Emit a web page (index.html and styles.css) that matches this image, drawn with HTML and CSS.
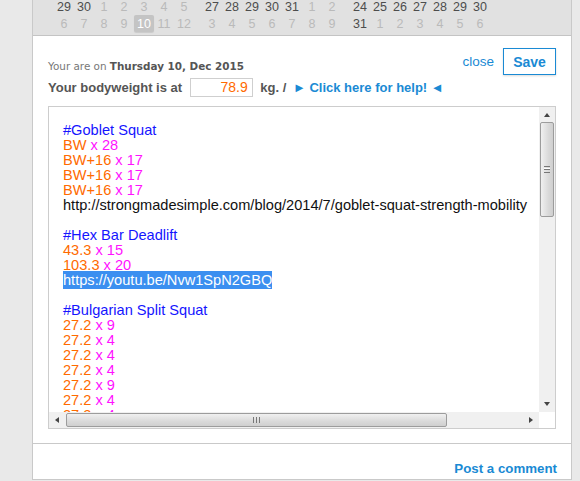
FILE: index.html
```html
<!DOCTYPE html>
<html>
<head>
<meta charset="utf-8">
<link rel="stylesheet" href="styles.css">
</head>
<body>
<div class="page">
  <div class="side"></div>
  <div class="panel">
    <div class="cal">
      <div class="grid">
        <div class="grp">
          <span class="d">29</span><span class="d">30</span><span class="l">1</span><span class="l">2</span><span class="l">3</span><span class="l">4</span><span class="l">5</span>
          <span class="l">6</span><span class="l">7</span><span class="l">8</span><span class="l">9</span><span class="sel">10</span><span class="l">11</span><span class="l">12</span>
        </div>
        <div class="grp">
          <span class="d">27</span><span class="d">28</span><span class="d">29</span><span class="d">30</span><span class="d">31</span><span class="l">1</span><span class="l">2</span>
          <span class="l">3</span><span class="l">4</span><span class="l">5</span><span class="l">6</span><span class="l">7</span><span class="l">8</span><span class="l">9</span>
        </div>
        <div class="grp">
          <span class="d">24</span><span class="d">25</span><span class="d">26</span><span class="d">27</span><span class="d">28</span><span class="d">29</span><span class="d">30</span>
          <span class="d">31</span><span class="l">1</span><span class="l">2</span><span class="l">3</span><span class="l">4</span><span class="l">5</span><span class="l">6</span>
        </div>
      </div>
    </div>
    <div class="body">
      <div class="toprow">
        <div class="info">
          <div class="date">Your are on <b>Thursday 10, Dec 2015</b></div>
          <div class="bw">Your bodyweight is at <span class="inp">78.9</span> kg. / <a class="help">► Click here for help! ◄</a></div>
        </div>
        <div class="actions">
          <a class="close">close</a>
          <span class="save">Save</span>
        </div>
      </div>
      <div class="ta">
        <div class="txt">
          <div class="h">#Goblet Squat</div>
          <div><span class="o">BW</span> <span class="m">x 28</span></div>
          <div><span class="o">BW+16</span> <span class="m">x 17</span></div>
          <div><span class="o">BW+16</span> <span class="m">x 17</span></div>
          <div><span class="o">BW+16</span> <span class="m">x 17</span></div>
          <div class="k">http://strongmadesimple.com/blog/2014/7/goblet-squat-strength-mobility</div>
          <div class="e">&nbsp;</div>
          <div class="h">#Hex Bar Deadlift</div>
          <div><span class="o">43.3</span> <span class="m">x 15</span></div>
          <div><span class="o">103.3</span> <span class="m">x 20</span></div>
          <div><span class="hl">https://youtu.be/Nvw1SpN2GBQ</span></div>
          <div class="e">&nbsp;</div>
          <div class="h">#Bulgarian Split Squat</div>
          <div><span class="o">27.2</span> <span class="m">x 9</span></div>
          <div><span class="o">27.2</span> <span class="m">x 4</span></div>
          <div><span class="o">27.2</span> <span class="m">x 4</span></div>
          <div><span class="o">27.2</span> <span class="m">x 4</span></div>
          <div><span class="o">27.2</span> <span class="m">x 9</span></div>
          <div><span class="o">27.2</span> <span class="m">x 4</span></div>
          <div><span class="o">27.2</span> <span class="m">x 4</span></div>
        </div>
        <div class="vbar">
          <span class="arr up"></span>
          <div class="vtrack"><div class="vthumb"><span class="grip-h"></span></div></div>
          <span class="arr down"></span>
        </div>
        <div class="hbar">
          <span class="arr left"></span>
          <div class="htrack"><div class="hthumb"><span class="grip-v"></span></div></div>
          <span class="arr right"></span>
        </div>
        <div class="corner"></div>
      </div>
    </div>
    <div class="foot">
      <a class="post">Post a comment</a>
    </div>
  </div>
  <div class="side right"></div>
</div>
</body>
</html>
```

FILE: styles.css
```css
html, body {
  margin: 0;
  padding: 0;
  background: #e9e9e9;
  overflow: hidden;
}
.page {
  display: flex;
  width: 580px;
  height: 481px;
}
.side {
  width: 32px;
  background: #e9e9e9;
  flex: none;
}
.side.right {
  width: 8px;
}
.panel {
  width: 538px;
  height: 479px;
  flex: none;
  background: #fff;
  border-left: 1px solid #c9c9c9;
  border-right: 1px solid #c9c9c9;
  border-bottom: 1px solid #c9c9c9;
  display: flex;
  flex-direction: column;
  overflow: hidden;
}
.cal {
  height: 35px;
  background: #e1e1e1;
  border-bottom: 1px solid #c4c4c4;
  overflow: hidden;
  flex: none;
}
.grid {
  display: flex;
  gap: 8px;
  margin-top: -2px;
  padding-left: 21px;
}
.grp {
  display: grid;
  grid-template-columns: repeat(7, 20px);
  grid-auto-rows: 17px;
  font-family: "Liberation Sans", Arial, sans-serif;
  font-size: 12.5px;
}
.grp span {
  display: flex;
  align-items: center;
  justify-content: center;
}
.grp .d { color: #4d4d4d; }
.grp .l { color: #bababa; }
.grp .sel {
  background: #c4c4c4;
  color: #fff;
  border-radius: 2px;
  box-shadow: 0 1px 1px rgba(0,0,0,0.1);
}
.body {
  padding: 10px 15px 0 15px;
  flex: 1;
}
.toprow {
  display: flex;
  justify-content: space-between;
  align-items: flex-start;
}
.info {
  padding-top: 13px;
}
.date {
  font-family: "DejaVu Sans", Verdana, sans-serif;
  font-size: 10.4px;
  color: #777;
  line-height: 14px;
}
.date b {
  color: #555;
}
.bw {
  margin-top: 5px;
  font-family: "Liberation Sans", Arial, sans-serif;
  font-size: 13px;
  font-weight: bold;
  color: #555;
  display: flex;
  align-items: center;
  white-space: pre;
}
.inp {
  display: inline-block;
  width: 57px;
  height: 17px;
  border: 1px solid #cfcfcf;
  margin: 0 4px 0 4px;
  text-align: right;
  padding-right: 4px;
  color: #ff6a00;
  font-weight: normal;
  font-size: 14px;
  line-height: 17px;
}
.kg {
  font-size: 13.5px;
}
.help {
  color: #1a8ad4;
  margin-left: 3px;
  font-size: 13px;
}
.actions {
  display: flex;
  align-items: center;
  gap: 9px;
  padding-top: 2px;
}
.close {
  color: #1a8ad4;
  font-family: "Liberation Sans", Arial, sans-serif;
  font-size: 13.5px;
}
.save {
  display: inline-flex;
  align-items: center;
  justify-content: center;
  width: 51px;
  height: 25px;
  border: 1.5px solid #1a8ad4;
  color: #1a8ad4;
  font-family: "Liberation Sans", Arial, sans-serif;
  font-weight: bold;
  font-size: 14px;
  box-shadow: 0 1px 2px rgba(0,0,0,0.15);
  background: #fff;
}
.ta {
  margin-top: 9px;
  width: 506px;
  height: 321px;
  border: 1px solid #cdcdcd;
  display: grid;
  grid-template-columns: 490px 16px;
  grid-template-rows: 305px 16px;
}
.txt {
  overflow: hidden;
  padding: 16px 0 0 14px;
  font-family: "Liberation Sans", Arial, sans-serif;
  font-size: 14.6px;
  line-height: 15px;
  white-space: nowrap;
}
.txt .h { color: #1515ff; }
.txt .o { color: #ff6a00; }
.txt .m { color: #ff12ff; }
.txt .k { color: #111; }
.txt .hl {
  background: #3b8ff0;
  color: #fff;
  padding: 1px 0;
}
.vbar {
  background: #f0f0f0;
  display: flex;
  flex-direction: column;
  align-items: center;
}
.vtrack {
  flex: 1;
  width: 100%;
  padding: 0 1px;
  box-sizing: border-box;
}
.vthumb {
  height: 93px;
  border: 1px solid #9c9c9c;
  border-radius: 2px;
  background: linear-gradient(to right, #f0f0f0, #dadada 60%, #cfcfcf);
  display: flex;
  align-items: center;
  justify-content: center;
}
.grip-h {
  width: 6px;
  height: 5px;
  border-top: 1px solid #777;
  border-bottom: 1px solid #777;
  background: linear-gradient(#fff 0, #fff 1px, #777 1px, #777 2px, transparent 2px);
  background-position: 0 1px;
  background-repeat: no-repeat;
}
.hbar {
  background: #f0f0f0;
  display: flex;
  align-items: center;
}
.htrack {
  flex: 1;
  height: 100%;
  padding: 1px 0;
  box-sizing: border-box;
}
.hthumb {
  width: 381px;
  height: 100%;
  box-sizing: border-box;
  border: 1px solid #9c9c9c;
  border-radius: 2px;
  background: linear-gradient(#f0f0f0, #dadada 60%, #cfcfcf);
  display: flex;
  align-items: center;
  justify-content: center;
}
.grip-v {
  width: 5px;
  height: 6px;
  border-left: 1px solid #777;
  border-right: 1px solid #777;
  background: linear-gradient(to right, transparent 1px, #777 1px, #777 2px, transparent 2px);
  background-position: 1px 0;
  background-repeat: no-repeat;
}
.corner {
  background: #fff;
}
.arr {
  flex: none;
  width: 0;
  height: 0;
  border-style: solid;
  border-color: transparent;
}
.up {
  margin: 6px 0 5px;
  border-width: 0 3.5px 4px 3.5px;
  border-bottom-color: #444;
}
.down {
  margin: 6px 0 6px;
  border-width: 4px 3.5px 0 3.5px;
  border-top-color: #444;
}
.left {
  margin: 0 7px 0 6px;
  border-width: 3.5px 4px 3.5px 0;
  border-right-color: #444;
}
.right {
  margin: 0 6px 0 6px;
  border-width: 3.5px 0 3.5px 4px;
  border-left-color: #444;
}
.foot {
  height: 33px;
  border-top: 1px solid #c9c9c9;
  display: flex;
  justify-content: flex-end;
  align-items: flex-end;
  padding: 0 14px 2px 0;
  margin-top: 14px;
  flex: none;
}
.post {
  color: #1a8ad4;
  font-family: "Liberation Sans", Arial, sans-serif;
  font-weight: bold;
  font-size: 13.3px;
  line-height: 16px;
}
```
